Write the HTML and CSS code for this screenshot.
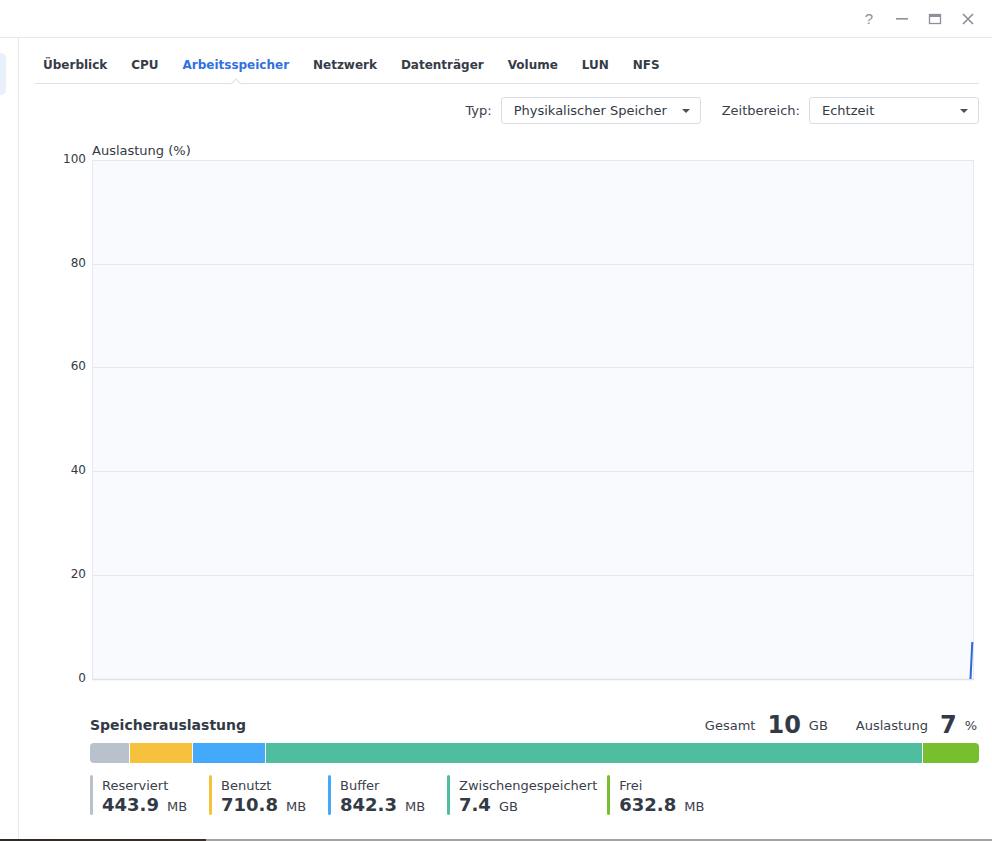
FILE: index.html
```html
<!DOCTYPE html>
<html lang="de">
<head>
<meta charset="utf-8">
<title>Ressourcen-Monitor</title>
<link rel="stylesheet" href="styles.css">
</head>
<body>
<div class="window">
  <header class="titlebar">
    <span class="tb-btn tb-help">?</span>
    <span class="tb-btn"><svg width="14" height="14" viewBox="0 0 14 14"><rect x="1" y="6" width="12" height="1.6" fill="#8b9099"/></svg></span>
    <span class="tb-btn"><svg width="14" height="14" viewBox="0 0 14 14"><rect x="1.5" y="2.5" width="11" height="9" fill="none" stroke="#8b9099" stroke-width="1.3"/><rect x="1" y="2" width="12" height="3" fill="#8b9099"/></svg></span>
    <span class="tb-btn"><svg width="14" height="14" viewBox="0 0 14 14"><path d="M2 2 L12 12 M12 2 L2 12" stroke="#8b9099" stroke-width="1.7"/></svg></span>
  </header>
  <div class="body">
    <aside class="sidebar"><div class="side-item"></div></aside>
    <main class="main">
      <nav class="tabs">
        <span class="tab">Überblick</span>
        <span class="tab">CPU</span>
        <span class="tab active">Arbeitsspeicher</span>
        <span class="tab">Netzwerk</span>
        <span class="tab">Datenträger</span>
        <span class="tab">Volume</span>
        <span class="tab">LUN</span>
        <span class="tab">NFS</span>
      </nav>
      <div class="toolbar">
        <span class="tool-label">Typ:</span>
        <div class="select select-type"><span>Physikalischer Speicher</span><i class="caret"></i></div>
        <span class="tool-label tool-label-2">Zeitbereich:</span>
        <div class="select select-time"><span>Echtzeit</span><i class="caret"></i></div>
      </div>
      <div class="chart">
        <svg width="944" height="566" viewBox="0 0 944 566">
          <text x="57" y="30.5" class="chart-title">Auslastung (%)</text>
          <rect x="57.5" y="36.5" width="881" height="519" fill="#f8fafe" stroke="#e3e7ee" stroke-width="1"/>
          <g stroke="#e4e8ee" stroke-width="1">
            <line x1="58" y1="140.5" x2="938" y2="140.5"/>
            <line x1="58" y1="243.5" x2="938" y2="243.5"/>
            <line x1="58" y1="347.5" x2="938" y2="347.5"/>
            <line x1="58" y1="451.5" x2="938" y2="451.5"/>
          </g>
          <line x1="57" y1="555.5" x2="939" y2="555.5" stroke="#dde2ea" stroke-width="1.5"/>
          <g class="axis">
            <text x="51" y="39">100</text>
            <text x="51" y="143">80</text>
            <text x="51" y="246">60</text>
            <text x="51" y="350">40</text>
            <text x="51" y="454">20</text>
            <text x="51" y="558">0</text>
          </g>
          <path d="M935.5 555 L937.3 518" stroke="#2b68dd" stroke-width="2" fill="none"/>
        </svg>
      </div>
      <section class="usage">
        <div class="usage-head">
          <h2 class="usage-title">Speicherauslastung</h2>
          <div class="stat"><span class="stat-label">Gesamt</span><span class="stat-num">10</span><span class="stat-unit">GB</span></div>
          <div class="stat stat-2"><span class="stat-label">Auslastung</span><span class="stat-num">7</span><span class="stat-unit">%</span></div>
        </div>
        <div class="bar">
          <div class="seg seg-res" style="flex-grow:39"></div>
          <div class="seg seg-used" style="flex-grow:62"></div>
          <div class="seg seg-buf" style="flex-grow:72"></div>
          <div class="seg seg-cache" style="flex-grow:654"></div>
          <div class="seg seg-free" style="flex-grow:56"></div>
        </div>
        <div class="legend">
          <div class="item item-res"><div class="item-label">Reserviert</div><div class="item-val"><b>443.9</b> MB</div></div>
          <div class="item item-used"><div class="item-label">Benutzt</div><div class="item-val"><b>710.8</b> MB</div></div>
          <div class="item item-buf"><div class="item-label">Buffer</div><div class="item-val"><b>842.3</b> MB</div></div>
          <div class="item item-cache"><div class="item-label">Zwischengespeichert</div><div class="item-val"><b>7.4</b> GB</div></div>
          <div class="item item-free"><div class="item-label">Frei</div><div class="item-val"><b>632.8</b> MB</div></div>
        </div>
      </section>
    </main>
  </div>
  <div class="bottom-edge"></div>
</div>
</body>
</html>
```
FILE: styles.css
```css
* { box-sizing: border-box; }
html, body { margin: 0; padding: 0; background: #fff; }
body {
  font-family: "DejaVu Sans", Verdana, sans-serif;
  color: #333a45;
  width: 992px;
  height: 841px;
  overflow: hidden;
}
.window { display: flex; flex-direction: column; height: 841px; }

.titlebar {
  height: 38px;
  border-bottom: 1px solid #e4e7ec;
  display: flex;
  justify-content: flex-end;
  align-items: center;
  padding-right: 14px;
  gap: 13px;
  flex: none;
}
.tb-btn {
  width: 20px;
  height: 20px;
  display: flex;
  align-items: center;
  justify-content: center;
  color: #8b9099;
}
.tb-help { font-size: 15px; font-family: "Liberation Sans", Arial, sans-serif; }

.body { flex: 1; display: flex; min-height: 0; }
.sidebar {
  width: 19px;
  flex: none;
  border-right: 1px solid #e6e9ee;
  padding-top: 15px;
}
.side-item {
  width: 6px;
  height: 42px;
  background: #e8f0fc;
  border-radius: 0 5px 5px 0;
}

.main { flex: 1; padding: 0 13px 0 16px; display: flex; flex-direction: column; }

.tabs {
  height: 46px;
  border-bottom: 1px solid #dfe3e8;
  display: flex;
  gap: 23.9px;
  padding: 19px 0 0 8px;
  flex: none;
}
.tab {
  position: relative;
  font-size: 12px;
  font-weight: bold;
  line-height: 16px;
  color: #353c47;
  height: 26px;
}
.tab.active { color: #3271e0; }
.tab.active::after {
  content: "";
  position: absolute;
  left: 50%;
  bottom: -5px;
  width: 7px;
  height: 7px;
  margin-left: -4px;
  background: #fff;
  border-top: 1px solid #dfe3e8;
  border-left: 1px solid #dfe3e8;
  transform: rotate(45deg);
}

.toolbar {
  display: flex;
  justify-content: flex-end;
  align-items: center;
  margin-top: 13px;
  height: 27px;
  flex: none;
}
.tool-label { font-size: 13px; color: #3a414c; margin-right: 9px; }
.tool-label-2 { margin-left: 21px; }
.select {
  height: 27px;
  border: 1px solid #d9dee4;
  border-radius: 3px;
  display: flex;
  align-items: center;
  justify-content: space-between;
  padding: 0 10px 0 12px;
  font-size: 13px;
  color: #333a45;
}
.select-type { width: 200px; }
.select-time { width: 170px; }
.caret {
  width: 0; height: 0;
  border-left: 4px solid transparent;
  border-right: 4px solid transparent;
  border-top: 4px solid #4a5059;
}

.chart { height: 566px; flex: none; }
.chart svg { display: block; }
.chart-title { font-size: 13px; fill: #333a45; font-family: "DejaVu Sans", Verdana, sans-serif; }
.axis text { font-size: 12px; fill: #333a45; text-anchor: end; font-family: "DejaVu Sans", Verdana, sans-serif; }

.usage { margin: 21px 0 0 55px; }
.usage-head { display: flex; align-items: center; height: 28px; padding-right: 2px; }
.usage-title { margin: 0; font-size: 14px; font-weight: bold; color: #323a46; flex: 1; }
.stat { display: flex; align-items: center; }
.stat-2 { margin-left: 28px; }
.stat-label { font-size: 13px; color: #3a414c; }
.stat-num { font-size: 24px; font-weight: bold; color: #323a46; margin: 0 8px 0 12px; line-height: 28px; }
.stat-unit { font-size: 13px; color: #3a414c; }

.bar {
  margin-top: 4px;
  height: 20px;
  display: flex;
  gap: 1px;
  border-radius: 4px;
  overflow: hidden;
}
.seg { flex-basis: 0; flex-shrink: 0; }
.seg-res { background: #b9c1cc; }
.seg-used { background: #f6c13c; }
.seg-buf { background: #45a9fb; }
.seg-cache { background: #4fbe9e; }
.seg-free { background: #77bf2e; }

.legend { display: flex; gap: 12px; margin-top: 12px; }
.item {
  min-width: 107px;
  height: 40px;
  padding-left: 12px;
  position: relative;
}
.item-cache { margin-right: -2px; }
.item::before {
  content: "";
  position: absolute;
  left: 0; top: 0;
  width: 3px; height: 40px;
  border-radius: 2px;
  background: var(--c);
}
.item-res { --c: #b9c1cc; }
.item-used { --c: #f6c13c; }
.item-buf { --c: #45a9fb; }
.item-cache { --c: #4fbe9e; }
.item-free { --c: #77bf2e; }
.item-label { font-size: 13px; line-height: 19px; padding-top: 1px; color: #3a414c; }
.item-val { font-size: 13px; line-height: 20px; color: #3a414c; }
.item-val b { font-size: 18px; color: #323a46; margin-right: 4px; }

.bottom-edge {
  height: 2px;
  flex: none;
  background: linear-gradient(to right, #2e2a28 0, #3b2f28 206px, #a3a3a3 206px, #a3a3a3 100%);
}
```
